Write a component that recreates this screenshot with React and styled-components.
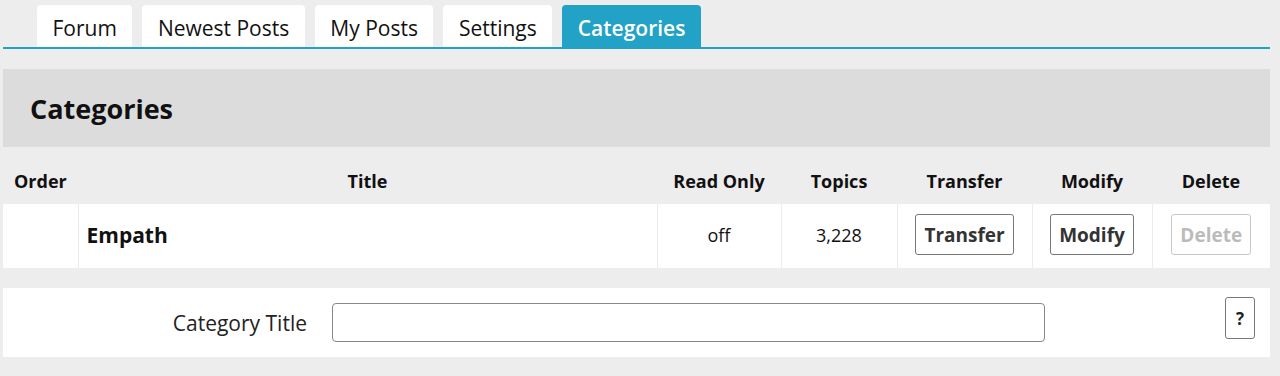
import React from "react"
import styled, { createGlobalStyle } from 'styled-components';

const GlobalStyle = createGlobalStyle`
  html, body {
    margin: 0;
    padding: 0;
    background: #ededed;
    font-family: "Open Sans", "Liberation Sans", sans-serif;
    color: #111;
  }
`

const Page = styled.div`
  width: 1267px;
  padding: 5px 0 0 3px;
  height: 371px;
  overflow: hidden;
`

const TabBar = styled.div`
  display: flex;
  gap: 10px;
  padding-left: 34px;
  border-bottom: 2px solid #22a2c6;
`

const Tab = styled.div`
  height: 42px;
  box-sizing: border-box;
  padding: 3px 15.5px 0;
  display: flex;
  align-items: center;
  font-size: 21px;
  border-radius: 4px 4px 0 0;
  background: ${p => p.active ? '#22a2c6' : '#fff'};
  color: ${p => p.active ? '#fff' : '#111'};
  font-weight: ${p => p.active ? 600 : 400};
`

const PanelHeader = styled.div`
  margin-top: 20px;
  height: 78px;
  background: #dcdcdc;
  display: flex;
  align-items: center;
  padding-left: 27px;
  h2 {
    margin: 0;
    font-size: 27px;
    font-weight: 700;
  }
`

const Table = styled.table`
  width: 100%;
  border-collapse: collapse;
  table-layout: fixed;
`

const HeadRow = styled.tr`
  height: 57px;
`

const HeadCell = styled.th`
  padding: 0 0 11px;
  vertical-align: bottom;
  font-size: 18px;
  font-weight: 700;
  text-align: ${p => p.left ? 'left' : 'center'};
  padding-left: ${p => p.left ? '11px' : '0'};
`

const Row = styled.tr`
  background: #fff;
  height: 64px;
`

const Cell = styled.td`
  border-left: 1px solid #ececec;
  padding: 0 0 3px;
  text-align: ${p => p.left ? 'left' : 'center'};
  padding-left: ${p => p.left ? '8px' : '0'};
  font-size: 18px;
  &:first-child { border-left: none; }
`

const Title = styled.span`
  font-size: 21px;
  font-weight: 700;
`

const Button = styled.button`
  font-family: "Open Sans", "Liberation Sans", sans-serif;
  font-size: 19px;
  font-weight: 700;
  height: 41px;
  padding: 0 8px;
  background: #fff;
  border: 1px solid ${p => p.disabled ? '#c8c8c8' : '#777'};
  color: ${p => p.disabled ? '#bbb' : '#333'};
  border-radius: 3px;
`

const FormPanel = styled.div`
  margin-top: 20px;
  height: 69px;
  background: #fff;
  display: flex;
  align-items: center;
`

const Label = styled.label`
  width: 304px;
  text-align: right;
  font-size: 21px;
  color: #222;
`

const Input = styled.input`
  margin-left: 25px;
  width: 713px;
  height: 39px;
  box-sizing: border-box;
  border: 1px solid #888;
  border-radius: 4px;
  background: #fff;
`

const HelpButton = styled.button`
  margin-left: auto;
  margin-right: 15px;
  margin-top: -9px;
  width: 30px;
  height: 42px;
  padding: 0;
  background: #fff;
  border: 1px solid #777;
  border-radius: 3px;
  font-family: "Open Sans", "Liberation Sans", sans-serif;
  font-weight: 700;
  font-size: 17px;
  color: #222;
`

const tabs = ['Forum', 'Newest Posts', 'My Posts', 'Settings', 'Categories']
const widths = [75, 579, 124, 116, 135, 120, 118]

const App = () => {
  return (
    <Page>
      <GlobalStyle />
      <TabBar>
        {tabs.map(t => <Tab key={t} active={t === 'Categories'}>{t}</Tab>)}
      </TabBar>
      <PanelHeader><h2>Categories</h2></PanelHeader>
      <Table>
        <colgroup>
          {widths.map((w, i) => <col key={i} style={{ width: w }} />)}
        </colgroup>
        <thead>
          <HeadRow>
            <HeadCell left>Order</HeadCell>
            <HeadCell>Title</HeadCell>
            <HeadCell>Read Only</HeadCell>
            <HeadCell>Topics</HeadCell>
            <HeadCell>Transfer</HeadCell>
            <HeadCell>Modify</HeadCell>
            <HeadCell>Delete</HeadCell>
          </HeadRow>
        </thead>
        <tbody>
          <Row>
            <Cell></Cell>
            <Cell left><Title>Empath</Title></Cell>
            <Cell>off</Cell>
            <Cell>3,228</Cell>
            <Cell><Button>Transfer</Button></Cell>
            <Cell><Button>Modify</Button></Cell>
            <Cell><Button disabled>Delete</Button></Cell>
          </Row>
        </tbody>
      </Table>
      <FormPanel>
        <Label>Category Title</Label>
        <Input type="text" />
        <HelpButton>?</HelpButton>
      </FormPanel>
    </Page>
  )
}

export default App
